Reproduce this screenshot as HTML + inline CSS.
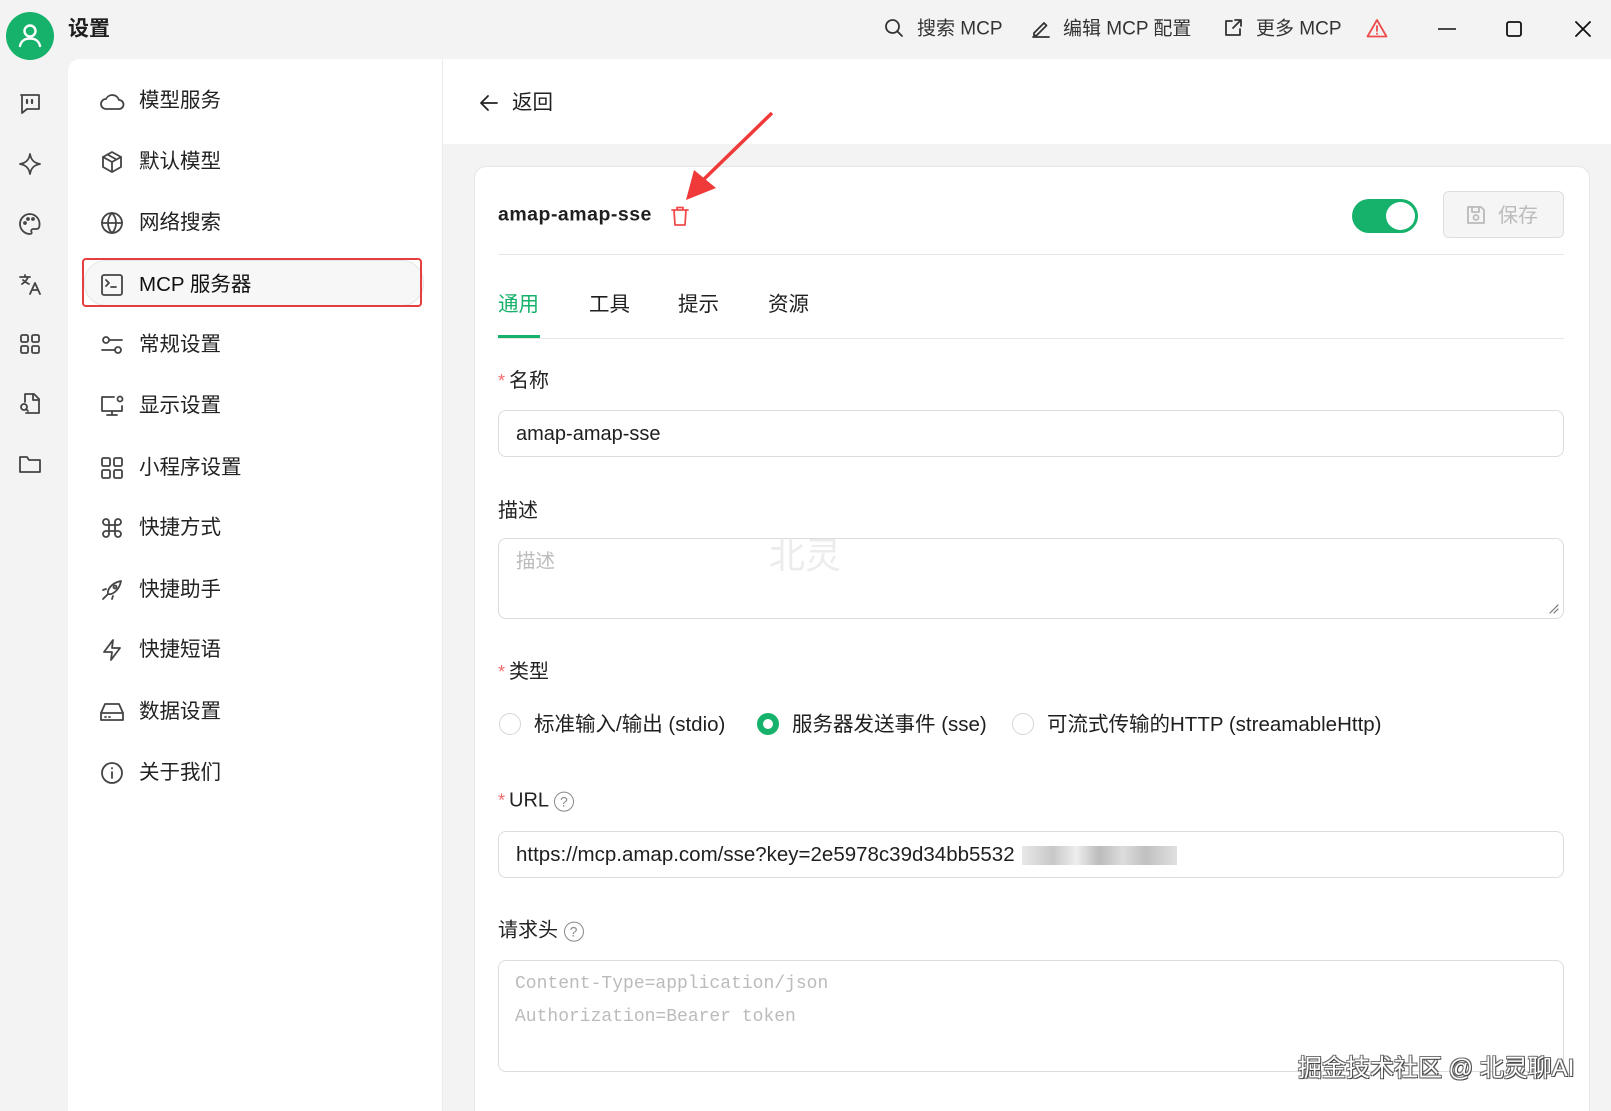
<!DOCTYPE html>
<html style="overflow:hidden;height:1111px"><head><meta charset="utf-8"><style>
*{box-sizing:border-box;margin:0;padding:0}
body{width:1611px;height:1111px;overflow:hidden;background:#f3f3f3;font-family:"Liberation Sans","Noto Sans CJK SC",sans-serif;color:#1f1f1f}
#w{position:relative;width:1611px;height:1111px;overflow:hidden}
.a{position:absolute}
.t{position:absolute;white-space:nowrap;line-height:1;transform:translateY(-50%)}
svg.i{position:absolute;fill:none;stroke:#444;stroke-width:1.8;stroke-linecap:round;stroke-linejoin:round}
.nav{font-size:20.5px;color:#222}
.lbl{font-size:20px;color:#222}
.req{color:#f56c6c;margin-right:4px;font-size:18px}
.box{position:absolute;border:1px solid #dcdcdc;border-radius:8px;background:#fff}
.radio{position:absolute;width:22px;height:22px;border-radius:50%;border:1px solid #d6d6d6;background:#fff}
</style></head><body><div id="w">
<div class="a" style="left:6px;top:12px;width:48px;height:48px;border-radius:50%;background:#16b16b"></div>
<svg class="i" style="left:16px;top:21px;stroke:#fff;stroke-width:2.4" width="28" height="28" viewBox="0 0 28 28"><circle cx="14" cy="10" r="5.5"/><path d="M4 25c1-5 5-7.5 10-7.5s9 2.5 10 7.5"/></svg>
<div class="t" style="left:68px;top:29px;font-size:21px;font-weight:bold">设置</div>

<svg class="i" style="left:884px;top:18px;stroke:#333" width="20" height="20" viewBox="0 0 20 20"><circle cx="8.5" cy="8.5" r="6.5"/><path d="M13.5 13.5l4.5 4.5"/></svg>
<div class="t" style="left:917px;top:29px;font-size:19px;color:#333">搜索 MCP</div>
<svg class="i" style="left:1031px;top:18px;stroke:#333" width="20" height="20" viewBox="0 0 20 20"><path d="M3 15l10-10 2.5 2.5-10 10H3z"/><path d="M2 19h16"/></svg>
<div class="t" style="left:1063px;top:29px;font-size:19px;color:#333">编辑 MCP 配置</div>
<svg class="i" style="left:1223px;top:18px;stroke:#333" width="20" height="20" viewBox="0 0 20 20"><path d="M9 3H3v14h14v-6"/><path d="M12 2h6v6M18 2l-8 8"/></svg>
<div class="t" style="left:1256px;top:29px;font-size:19px;color:#333">更多 MCP</div>
<svg class="i" style="left:1366px;top:18px;stroke:#ef4b4b" width="22" height="20" viewBox="0 0 22 20"><path d="M11 2L1.5 18.5h19z"/><path d="M11 8v5M11 15.5v.5"/></svg>
<svg class="i" style="left:1438px;top:28px;stroke:#111;stroke-width:1.6" width="18" height="2" viewBox="0 0 18 2"><path d="M0 1h18"/></svg>
<svg class="i" style="left:1506px;top:21px;stroke:#111;stroke-width:1.8" width="16" height="16" viewBox="0 0 16 16"><rect x="1" y="1" width="14" height="14" rx="2"/></svg>
<svg class="i" style="left:1575px;top:21px;stroke:#111;stroke-width:1.8" width="16" height="16" viewBox="0 0 16 16"><path d="M1 1l14 14M15 1L1 15"/></svg>

<svg class="i" style="left:18px;top:92px" width="24" height="24" viewBox="0 0 24 24"><path d="M3 3h18v14H9l-5 4V3z"/><path d="M9 8v3M14 8v3" stroke-width="2.2"/></svg>
<svg class="i" style="left:18px;top:152px" width="24" height="24" viewBox="0 0 24 24"><path d="M12 2c1 6 4 9 10 10-6 1-9 4-10 10-1-6-4-9-10-10 6-1 9-4 10-10z"/></svg>
<svg class="i" style="left:18px;top:212px" width="24" height="24" viewBox="0 0 24 24"><path d="M12 2a10 10 0 1 0 0 20c1.5 0 2-1 1.5-2-.8-1.5 0-3 2-3h3c2 0 3-2 3-4A10 10 0 0 0 12 2z"/><circle cx="7" cy="11" r="1"/><circle cx="10" cy="7" r="1"/><circle cx="15" cy="7" r="1"/></svg>
<svg class="i" style="left:18px;top:272px" width="24" height="24" viewBox="0 0 24 24"><path d="M2 5h10M7 3v2M4 12c3-2 5-4 6-7M5 8c2 2 4 3 6 4"/><path d="M12 22l5-11 5 11M14 18h6"/></svg>
<svg class="i" style="left:18px;top:332px" width="24" height="24" viewBox="0 0 24 24"><rect x="3" y="3" width="7" height="7" rx="1.5"/><rect x="14" y="3" width="7" height="7" rx="1.5"/><rect x="3" y="14" width="7" height="7" rx="1.5"/><rect x="14" y="14" width="7" height="7" rx="1.5"/></svg>
<svg class="i" style="left:18px;top:392px" width="24" height="24" viewBox="0 0 24 24"><path d="M7 10V2h9l5 5v14H8"/><path d="M15 2v6h6"/><circle cx="6" cy="15" r="3"/><path d="M8 17l2 2"/></svg>
<svg class="i" style="left:18px;top:452px" width="24" height="24" viewBox="0 0 24 24"><path d="M2 5h7l2 3h11v12H2z"/></svg>

<div class="a" style="left:68px;top:59px;width:375px;height:1052px;background:#fff;border-top-left-radius:12px;border-right:1px solid #ececec"></div>
<div class="a" style="left:84px;top:260px;width:340px;height:46px;border-radius:22px;background:#f7f7f7;border:1px solid #e4e4e4"></div>
<div class="a" style="left:82px;top:258px;width:340px;height:49px;border:2.5px solid #e53e3e;border-radius:4px"></div>

<svg class="i" style="left:99px;top:91px" width="26" height="22" viewBox="0 0 26 22"><path d="M7 18a5 5 0 0 1 0-10 7 7 0 0 1 13 1 4.5 4.5 0 0 1 0 9z"/></svg>
<div class="t nav" style="left:139px;top:101px">模型服务</div>
<svg class="i" style="left:100px;top:150px" width="24" height="24" viewBox="0 0 24 24"><path d="M12 2l9 5v10l-9 5-9-5V7z"/><path d="M3 7l9 5 9-5M12 12v10M7.5 4.5l9 5"/></svg>
<div class="t nav" style="left:139px;top:162px">默认模型</div>
<svg class="i" style="left:100px;top:211px" width="24" height="24" viewBox="0 0 24 24"><circle cx="12" cy="12" r="10"/><path d="M2 12h20M12 2c3 3 4 6.5 4 10s-1 7-4 10c-3-3-4-6.5-4-10s1-7 4-10z"/></svg>
<div class="t nav" style="left:139px;top:223px">网络搜索</div>
<svg class="i" style="left:100px;top:273px" width="24" height="24" viewBox="0 0 24 24"><rect x="2" y="2" width="20" height="20" rx="2"/><path d="M6 7l3 3-3 3M11 14h5"/></svg>
<div class="t nav" style="left:139px;top:285px;color:#111">MCP 服务器</div>
<svg class="i" style="left:100px;top:333px" width="24" height="24" viewBox="0 0 24 24"><circle cx="6" cy="7" r="3"/><path d="M10 7h12M2 17h12"/><circle cx="18" cy="17" r="3"/></svg>
<div class="t nav" style="left:139px;top:345px">常规设置</div>
<svg class="i" style="left:100px;top:394px" width="26" height="24" viewBox="0 0 26 24"><path d="M14 3H2v14h20v-5M12 17v4M7 21h10"/><circle cx="20" cy="5" r="2.5"/></svg>
<div class="t nav" style="left:139px;top:406px">显示设置</div>
<svg class="i" style="left:100px;top:456px" width="24" height="24" viewBox="0 0 24 24"><rect x="2" y="2" width="8" height="8" rx="1.5"/><rect x="14" y="2" width="8" height="8" rx="1.5"/><rect x="2" y="14" width="8" height="8" rx="1.5"/><rect x="14" y="14" width="8" height="8" rx="1.5"/></svg>
<div class="t nav" style="left:139px;top:468px">小程序设置</div>
<svg class="i" style="left:100px;top:516px" width="24" height="24" viewBox="0 0 24 24"><path d="M9 9h6v6H9zM9 9V6a3 3 0 1 0-3 3h3M15 9V6a3 3 0 1 1 3 3h-3M9 15v3a3 3 0 1 1-3-3h3M15 15v3a3 3 0 1 0 3-3h-3"/></svg>
<div class="t nav" style="left:139px;top:528px">快捷方式</div>
<svg class="i" style="left:100px;top:578px" width="24" height="24" viewBox="0 0 24 24"><path d="M8 16c-1-4 3-11 13-13-2 10-9 14-13 13zM8 16l-5 5M6 11l-3 1M13 18l-1 3"/><circle cx="15" cy="9" r="1.5"/></svg>
<div class="t nav" style="left:139px;top:590px">快捷助手</div>
<svg class="i" style="left:100px;top:638px" width="24" height="24" viewBox="0 0 24 24"><path d="M13 2L4 14h8l-1 8 9-12h-8z"/></svg>
<div class="t nav" style="left:139px;top:650px">快捷短语</div>
<svg class="i" style="left:99px;top:701px" width="26" height="22" viewBox="0 0 26 22"><path d="M2 12l4-9h14l4 9v7H2z"/><path d="M2 12h22M6 16h1M10 16h1"/></svg>
<div class="t nav" style="left:139px;top:712px">数据设置</div>
<svg class="i" style="left:100px;top:761px" width="24" height="24" viewBox="0 0 24 24"><circle cx="12" cy="12" r="10"/><path d="M12 11v6M12 7v.5"/></svg>
<div class="t nav" style="left:139px;top:773px">关于我们</div>

<div class="a" style="left:443px;top:59px;width:1168px;height:85px;background:#fff"></div>
<svg class="i" style="left:479px;top:93px;stroke:#222" width="20" height="20" viewBox="0 0 20 20"><path d="M18 10H2M9 3l-7 7 7 7"/></svg>
<div class="t" style="left:512px;top:103px;font-size:20.5px">返回</div>

<div class="a" style="left:474px;top:166px;width:1116px;height:945px;background:#fff;border:1px solid #e6e6e6;border-bottom:none;border-radius:12px 12px 0 0"></div>
<div class="t" style="left:498px;top:215px;font-size:19.5px;font-weight:bold;letter-spacing:.5px">amap-amap-sse</div>
<svg class="i" style="left:671px;top:206px;stroke:#ef4b4b;stroke-width:1.8" width="18" height="20" viewBox="0 0 18 20"><path d="M1 4h16M6 4V1.5h6V4M3 4l1 15h10l1-15"/></svg>
<svg class="a" style="left:680px;top:108px" width="100" height="100" viewBox="0 0 100 100"><path d="M92 5L20 75" stroke="#f03a3a" stroke-width="3.5"/><path d="M6 92L14 62 36 80z" fill="#f03a3a"/></svg>
<div class="a" style="left:1352px;top:199px;width:66px;height:34px;border-radius:17px;background:#16b16b"></div>
<div class="a" style="left:1386px;top:202px;width:29px;height:28px;border-radius:50%;background:#fff"></div>
<div class="a" style="left:1443px;top:191px;width:121px;height:47px;border:1px solid #dedede;border-radius:6px;background:#f5f5f5"></div>
<svg class="i" style="left:1466px;top:205px;stroke:#bbb" width="20" height="20" viewBox="0 0 20 20"><path d="M2 2h13l3 3v13H2z"/><path d="M6 2v5h7V2"/><circle cx="10" cy="12.5" r="2.5"/></svg>
<div class="t" style="left:1498px;top:216px;font-size:20px;color:#bbb">保存</div>
<div class="a" style="left:498px;top:254px;width:1066px;height:1px;background:#e6e6e6"></div>

<div class="t" style="left:498px;top:305px;font-size:20.5px;color:#16b16b">通用</div>
<div class="t" style="left:589px;top:305px;font-size:20.5px">工具</div>
<div class="t" style="left:678px;top:305px;font-size:20.5px">提示</div>
<div class="t" style="left:768px;top:305px;font-size:20.5px">资源</div>
<div class="a" style="left:498px;top:338px;width:1066px;height:1px;background:#e6e6e6"></div>
<div class="a" style="left:498px;top:335px;width:42px;height:3px;background:#16b16b"></div>

<div class="t lbl" style="left:498px;top:381px"><span class="req">*</span>名称</div>
<div class="box" style="left:498px;top:410px;width:1066px;height:47px"></div>
<div class="t" style="left:516px;top:434px;font-size:20px">amap-amap-sse</div>

<div class="t lbl" style="left:498px;top:511px">描述</div>
<div class="box" style="left:498px;top:538px;width:1066px;height:81px"></div>
<div class="t" style="left:516px;top:562px;font-size:19.5px;color:#bbb">描述</div>
<div class="t" style="left:769px;top:556px;font-size:36px;color:#ececec">北灵</div>
<svg class="i" style="left:1549px;top:604px;stroke:#777;stroke-width:1.2" width="10" height="10" viewBox="0 0 10 10"><path d="M9 1L1 9M9 5L5 9"/></svg>

<div class="t lbl" style="left:498px;top:672px"><span class="req">*</span>类型</div>
<div class="radio" style="left:499px;top:713px"></div>
<div class="t" style="left:534px;top:725px;font-size:20.5px">标准输入/输出 (stdio)</div>
<div class="radio" style="left:757px;top:713px;border:6px solid #16b16b"></div>
<div class="t" style="left:792px;top:725px;font-size:20.5px">服务器发送事件 (sse)</div>
<div class="radio" style="left:1012px;top:713px"></div>
<div class="t" style="left:1047px;top:725px;font-size:20.5px">可流式传输的HTTP (streamableHttp)</div>

<div class="t lbl" style="left:498px;top:801px"><span class="req">*</span>URL <span style="display:inline-block;width:20px;height:20px;border:1.5px solid #888;border-radius:50%;font-size:14px;color:#888;text-align:center;line-height:18px;vertical-align:middle">?</span></div>
<div class="box" style="left:498px;top:831px;width:1066px;height:47px"></div>
<div class="t" style="left:516px;top:855px;font-size:20.5px">https://mcp.amap.com/sse?key=2e5978c39d34bb5532</div>
<div class="a" style="left:1022px;top:846px;width:155px;height:19px;background:linear-gradient(90deg,#e8e8e8,#c8c8c8 20%,#eee 35%,#bbb 50%,#ddd 65%,#c0c0c0 80%,#e0e0e0)"></div>

<div class="t lbl" style="left:498px;top:931px">请求头 <span style="display:inline-block;width:20px;height:20px;border:1.5px solid #888;border-radius:50%;font-size:14px;color:#888;text-align:center;line-height:18px;vertical-align:middle">?</span></div>
<div class="box" style="left:498px;top:960px;width:1066px;height:112px"></div>
<div class="t" style="left:515px;top:984px;font-family:'Liberation Mono',monospace;font-size:18px;color:#bbb">Content-Type=application/json</div>
<div class="t" style="left:515px;top:1017px;font-family:'Liberation Mono',monospace;font-size:18px;color:#bbb">Authorization=Bearer token</div>

<div class="t" style="left:1298px;top:1069px;font-size:24px;color:#fff;text-shadow:1px 1px 0 #444,-1px -1px 0 #777,1px -1px 0 #666,-1px 1px 0 #666">掘金技术社区 @ 北灵聊AI</div>
</div></body></html>
